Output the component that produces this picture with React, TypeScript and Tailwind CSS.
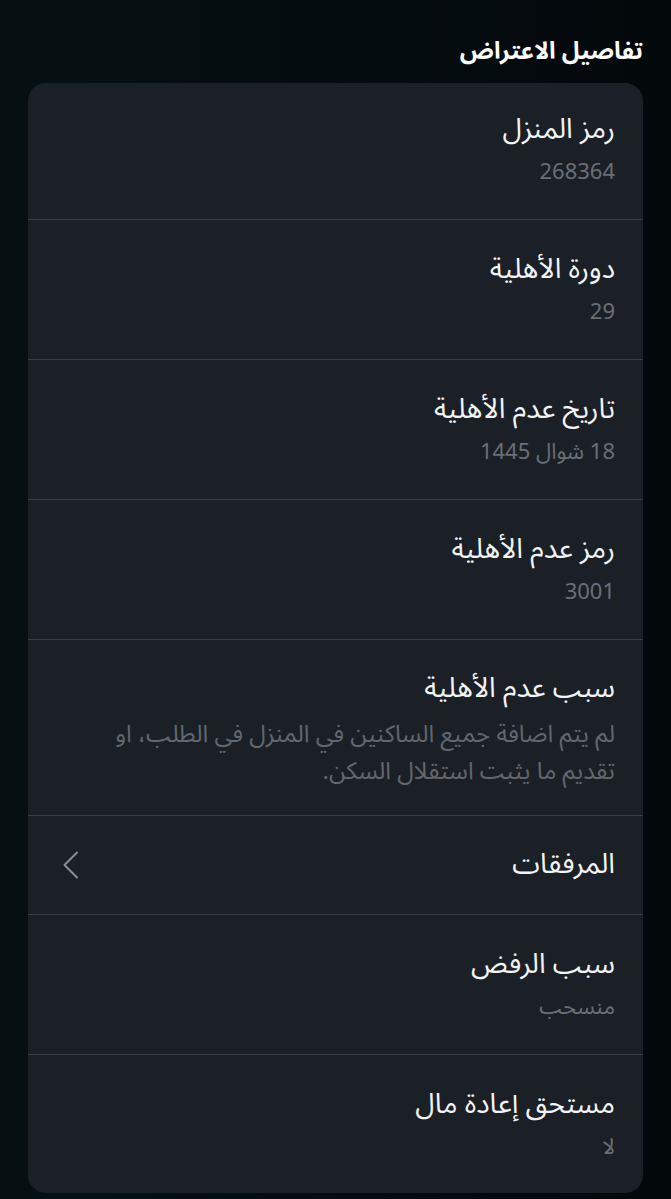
const rows = [
  { label: "رمز المنزل", value: "268364" },
  { label: "دورة الأهلية", value: "29" },
  { label: "تاريخ عدم الأهلية", value: "18 شوال 1445" },
  { label: "رمز عدم الأهلية", value: "3001" },
];

const rowsAfter = [
  { label: "سبب الرفض", value: "منسحب" },
  { label: "مستحق إعادة مال", value: "لا" },
];

function Row({ label, value }: { label: string; value: string }) {
  return (
    <div className="border-b border-[#3a3f45] px-7 pt-[30px] pb-[28px] first:pt-[27px] last:border-b-0 last:pb-[27px]">
      <div className="text-[28px] leading-[40px] text-[#f2f3f4]">{label}</div>
      <div className="mt-1 text-[22px] leading-[37px] text-[#6a6f75]">{value}</div>
    </div>
  );
}

export default function App() {
  return (
    <div
      dir="rtl"
      className="min-h-[1199px] bg-gradient-to-l from-[#03080b] to-[#061013] pt-[34px] pr-[28px] pl-[28px]"
      style={{ fontFamily: '"Noto Sans Arabic", "Noto Kufi Arabic", "DejaVu Sans", sans-serif' }}
    >
      <h1 className="mb-[13px] text-[24px] font-bold leading-[36px] text-white">تفاصيل الاعتراض</h1>
      <div className="rounded-[18px] bg-[#1b2027]">
        {rows.map((r) => (
          <Row key={r.label} {...r} />
        ))}
        <div className="border-b border-[#3a3f45] px-7 pt-[29px] pb-[25px]">
          <div className="text-[28px] leading-[40px] text-[#f2f3f4]">سبب عدم الأهلية</div>
          <div className="mt-[7px] max-w-[530px] text-[24px] leading-[37px] text-[#62676d]">
            لم يتم اضافة جميع الساكنين في المنزل في الطلب، او تقديم ما يثبت استقلال السكن.
          </div>
        </div>
        <div className="flex h-[99px] items-center justify-between border-b border-[#3a3f45] pl-[34px] pr-7">
          <span className="text-[28px] leading-[40px] text-[#f2f3f4]">المرفقات</span>
          <svg width="17" height="28" viewBox="0 0 17 28" fill="none">
            <path d="M15 1.5 L2.5 14 L15 26.5" stroke="#8a8f95" strokeWidth="2" strokeLinecap="round" strokeLinejoin="round" />
          </svg>
        </div>
        {rowsAfter.map((r) => (
          <Row key={r.label} {...r} />
        ))}
      </div>
    </div>
  );
}
